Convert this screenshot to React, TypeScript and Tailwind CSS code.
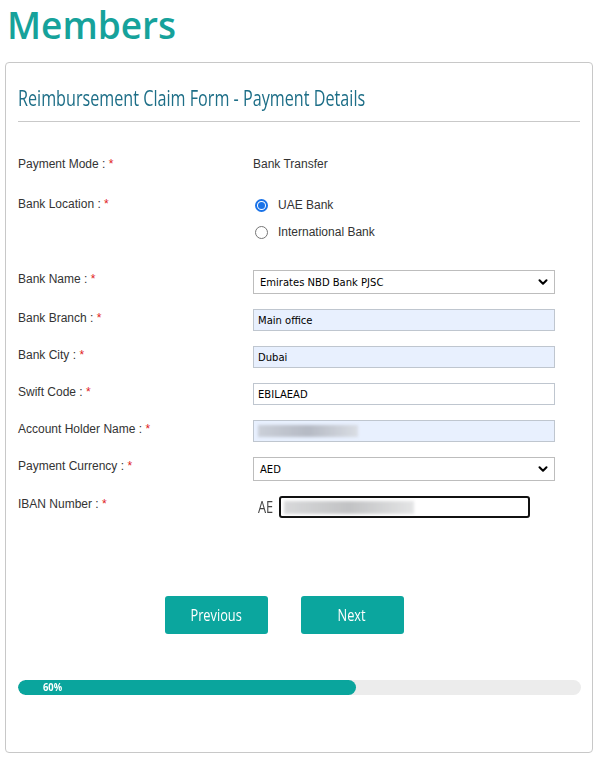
import { ChevronDown } from 'lucide-react';

const narrow = { fontFamily: '"Liberation Sans Narrow", "Open Sans", sans-serif' };
const tahoma = { fontFamily: 'Tahoma, "DejaVu Sans", sans-serif' };

function Label({ text }: { text: string }) {
    return (
        <div className="w-[235px] shrink-0 pt-[2px] text-[12px] leading-[14px] text-[#333]">
            {text} : <span className="text-[#e0201c]">*</span>
        </div>
    );
}

function TextBox({ value, filled, blurred }: { value: string; filled?: boolean; blurred?: boolean }) {
    return (
        <div
            className={`flex h-[22px] w-[302px] items-center border border-[#bfc6cf] px-[4px] text-[10px] text-black ${filled ? 'bg-[#e8f0fe]' : 'bg-white'}`}
            style={tahoma}
        >
            {blurred ? <div className="h-[12px] w-[100px] bg-gradient-to-r from-[#c4c8d0] via-[#a9adb6] to-[#d6d9de] opacity-80 blur-[1.5px]" /> : value}
        </div>
    );
}

function SelectBox({ value }: { value: string }) {
    return (
        <div
            className="flex h-[24px] w-[302px] items-center justify-between border border-[#bdbdbd] bg-white pl-[6px] pr-[4px] text-[10px] text-black"
            style={tahoma}
        >
            <span>{value}</span>
            <ChevronDown className="h-[14px] w-[14px]" strokeWidth={3.5} />
        </div>
    );
}

function Radio({ checked, label }: { checked?: boolean; label: string }) {
    return (
        <div className="flex h-[18px] items-center gap-[10px] pl-[2px]">
            {checked ? (
                <span className="flex h-[13px] w-[13px] items-center justify-center rounded-full border-2 border-[#1a73e8]">
                    <span className="h-[7px] w-[7px] rounded-full bg-[#1a73e8]" />
                </span>
            ) : (
                <span className="h-[13px] w-[13px] rounded-full border border-[#767676]" />
            )}
            <span className="text-[12px] text-[#333]">{label}</span>
        </div>
    );
}

export default function App() {
    return (
        <div className="min-h-screen bg-white" style={{ fontFamily: '"Liberation Sans", Arial, sans-serif' }}>
            <h1
                className="pl-[7px] pt-[2px] text-[37px] font-semibold leading-[46px] text-[#16a29b]"
                style={{ fontFamily: '"Open Sans", sans-serif' }}
            >
                Members
            </h1>
            <div className="mx-[5px] mt-[14px] w-[588px] rounded-[4px] border border-[#c8c8c8] px-[12px] pb-[57px]">
                <h2 className="pt-[22px] text-[21px] leading-[26px] text-[#1d6e87]" style={narrow}>
                    <span className="inline-block origin-left scale-x-[0.77] whitespace-nowrap">
                        Reimbursement Claim Form - Payment Details
                    </span>
                </h2>
                <div className="mt-[10px] border-t border-[#c9c9c9]" />

                <div className="mt-[33px] flex">
                    <Label text="Payment Mode" />
                    <div className="pt-[2px] text-[12px] leading-[14px] text-[#333]">Bank Transfer</div>
                </div>

                <div className="mt-[24px] flex">
                    <Label text="Bank Location" />
                    <div className="flex flex-col gap-[9px] pt-[1px]">
                        <Radio checked label="UAE Bank" />
                        <Radio label="International Bank" />
                    </div>
                </div>

                <div className="mt-[29px] flex">
                    <Label text="Bank Name" />
                    <SelectBox value="Emirates NBD Bank PJSC" />
                </div>
                <div className="mt-[15px] flex">
                    <Label text="Bank Branch" />
                    <TextBox value="Main office" filled />
                </div>
                <div className="mt-[15px] flex">
                    <Label text="Bank City" />
                    <TextBox value="Dubai" filled />
                </div>
                <div className="mt-[15px] flex">
                    <Label text="Swift Code" />
                    <TextBox value="EBILAEAD" />
                </div>
                <div className="mt-[15px] flex">
                    <Label text="Account Holder Name" />
                    <TextBox value="" filled blurred />
                </div>
                <div className="mt-[15px] flex">
                    <Label text="Payment Currency" />
                    <SelectBox value="AED" />
                </div>
                <div className="mt-[14px] flex">
                    <Label text="IBAN Number" />
                    <div className="flex items-center">
                        <span className="ml-[5px] w-[21px] text-[16px] text-[#444]" style={narrow}>
                            <span className="inline-block origin-left scale-x-[0.8]">AE</span>
                        </span>
                        <div className="flex h-[22px] w-[251px] items-center rounded-[3px] border-2 border-[#111] px-[3px]">
                            <div className="h-[13px] w-[130px] bg-gradient-to-r from-[#cfd0d2] via-[#b3b4b6] to-[#dedfe0] opacity-80 blur-[1.5px]" />
                        </div>
                    </div>
                </div>

                <div className="mt-[77px] flex justify-center gap-[33px] pr-[30px]">
                    <button className="h-[38px] w-[103px] rounded-[3px] bg-[#0ba69e] text-[16px] text-white" style={narrow}>
                        <span className="inline-block scale-x-[0.8]">Previous</span>
                    </button>
                    <button className="h-[38px] w-[103px] rounded-[3px] bg-[#0ba69e] text-[16px] text-white" style={narrow}>
                        <span className="inline-block scale-x-[0.8]">Next</span>
                    </button>
                </div>

                <div className="mt-[46px] h-[15px] w-[563px] overflow-hidden rounded-full bg-[#ececec]">
                    <div
                        className="flex h-full items-center rounded-full bg-[#0aa59d] pl-[25px] text-[11px] font-bold text-white"
                        style={{ ...narrow, width: '60%' }}
                    >
                        <span className="inline-block origin-left scale-x-[0.85]">60%</span>
                    </div>
                </div>
            </div>
        </div>
    );
}
